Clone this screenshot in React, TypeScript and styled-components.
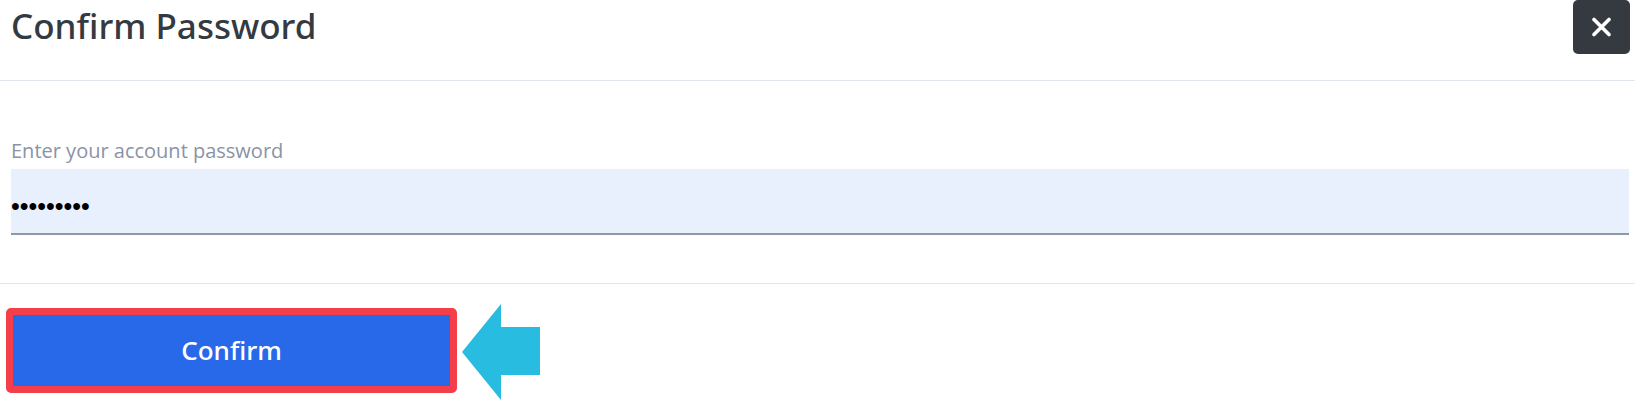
import styled, { createGlobalStyle } from "styled-components";

const colors = {
  TEXT: "#343a40",
  MUTED: "#8a93a6",
  DIVIDER: "#e1e6ee",
  INPUT_BG: "#e8f0fe",
  PRIMARY: "#2769e9",
  HIGHLIGHT: "#f43f4a",
  POINTER: "#27bce0",
};

const GlobalStyle = createGlobalStyle`
  body {
    margin: 0;
    background: #ffffff;
    font-family: "Open Sans", "Noto Sans", sans-serif;
  }
`;

const App = () => {
  return (
    <>
      <GlobalStyle />
      <Modal>
        <Header>
          <Title>Confirm Password</Title>
          <CloseButton aria-label="Close">
            <svg width="21" height="20" viewBox="0 0 21 20">
              <path d="M3 2.5L18 17.5M18 2.5L3 17.5" stroke="#fff" strokeWidth="3.6" strokeLinecap="round" />
            </svg>
          </CloseButton>
        </Header>
        <Body>
          <Label htmlFor="password">Enter your account password</Label>
          <PasswordInput id="password" type="password" value="123456789" readOnly />
        </Body>
        <Footer>
          <ConfirmButton>Confirm</ConfirmButton>
          <PointerArrow width="80" height="96" viewBox="0 0 80 96">
            <path d="M0 48L39 0V23H78V71H39V96Z" fill={colors.POINTER} />
          </PointerArrow>
        </Footer>
      </Modal>
    </>
  );
};

export default App;

const Modal = styled.div`
  width: 1635px;
  height: 405px;
  overflow: hidden;
`;

const Header = styled.div`
  display: flex;
  justify-content: space-between;
  align-items: flex-start;
  height: 80px;
  padding: 0 5px 0 11px;
  border-bottom: 1px solid ${colors.DIVIDER};
`;

const Title = styled.h2`
  margin: 2px 0 0;
  font-family: "Noto Sans", "Open Sans", sans-serif;
  font-size: 35px;
  font-weight: 500;
  line-height: 48px;
  color: ${colors.TEXT};
`;

const CloseButton = styled.button`
  display: flex;
  align-items: center;
  justify-content: center;
  width: 57px;
  height: 54px;
  padding: 0;
  border: none;
  border-radius: 5px;
  background: ${colors.TEXT};
  cursor: pointer;
`;

const Body = styled.div`
  display: flex;
  flex-direction: column;
  padding: 59px 6px 48px 11px;
  border-bottom: 1px solid ${colors.DIVIDER};
`;

const Label = styled.label`
  font-size: 20px;
  line-height: 22px;
  color: ${colors.MUTED};
  margin-bottom: 7px;
`;

const PasswordInput = styled.input`
  box-sizing: border-box;
  height: 66px;
  padding: 10px 0 0 0;
  border: none;
  border-bottom: 2px solid #8f98aa;
  background: ${colors.INPUT_BG};
  font-family: "Liberation Sans", Arial, sans-serif;
  font-size: 25px;
  letter-spacing: 0;
  color: #000;
  outline: none;
`;

const Footer = styled.div`
  display: flex;
  align-items: center;
  gap: 5px;
  padding: 16px 0 0 6px;
`;

const ConfirmButton = styled.button`
  box-sizing: border-box;
  width: 451px;
  height: 85px;
  border: 7px solid ${colors.HIGHLIGHT};
  border-radius: 5px;
  background: ${colors.PRIMARY};
  color: #ffffff;
  font-family: "Noto Sans", "Open Sans", sans-serif;
  font-size: 26px;
  font-weight: 500;
  cursor: pointer;
`;

const PointerArrow = styled.svg`
  flex-shrink: 0;
  margin-top: 4px;
`;
